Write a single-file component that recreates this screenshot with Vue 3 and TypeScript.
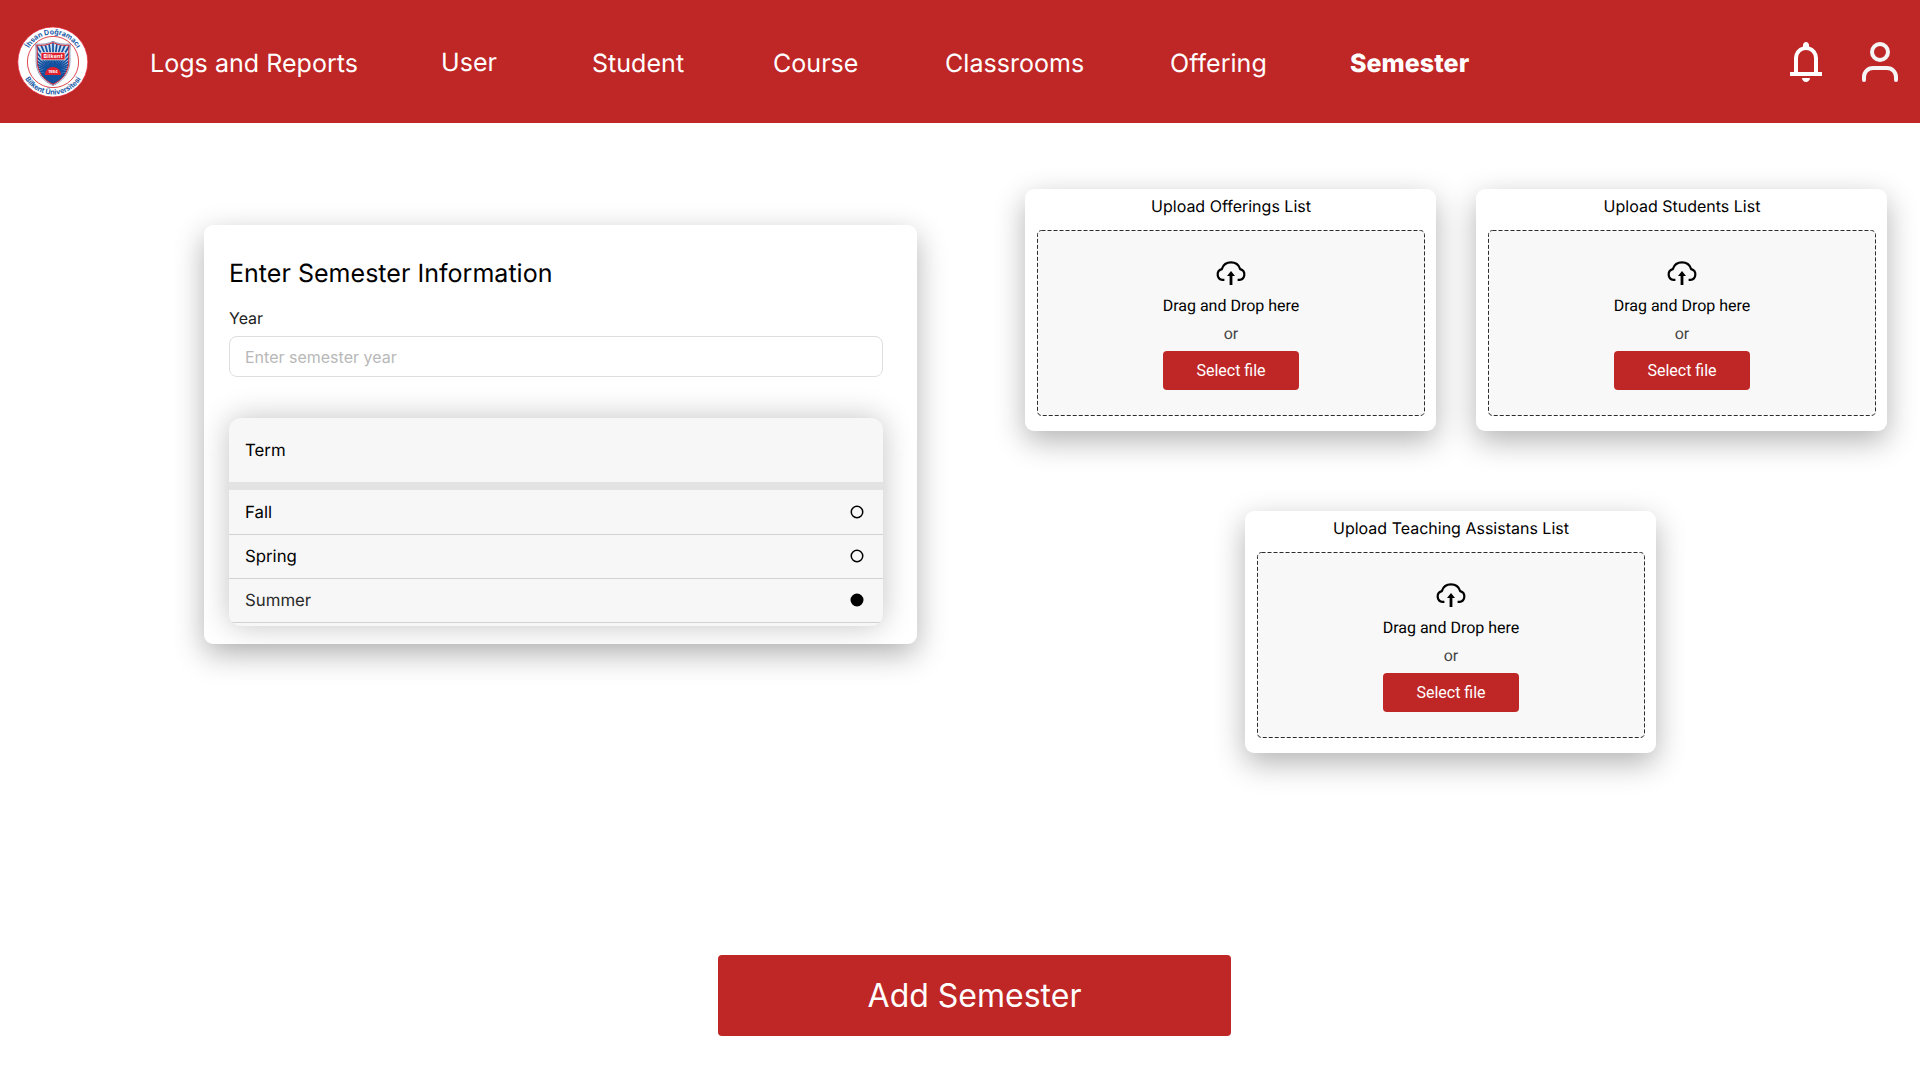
<script setup lang="ts">
import { ref } from 'vue'

interface NavItem {
  label: string
  raised?: boolean
}

const navItems: NavItem[] = [
  { label: 'Logs and Reports' },
  { label: 'User', raised: true },
  { label: 'Student' },
  { label: 'Course' },
  { label: 'Classrooms' },
  { label: 'Offering' },
  { label: 'Semester' },
]
const activeItem = ref('Semester')

const terms: string[] = ['Fall', 'Spring', 'Summer']
const selectedTerm = ref('Summer')
const year = ref('')

const uploads: string[] = [
  'Upload Offerings List',
  'Upload Students List',
  'Upload Teaching Assistans List',
]

// Angles of the rays that fan out behind the crest
const rays: number[] = Array.from({ length: 45 }, (_, i) => i * 8)
</script>

<template>
  <div class="page">
    <header class="topbar">
      <svg class="logo" viewBox="0 0 72 72" width="72" height="72">
        <defs>
          <path id="arc-top" d="M8.300 36a27.700 27.700 0 0 1 55.400 0" />
          <path id="arc-bottom" d="M3.400 36a32.600 32.600 0 0 0 65.200 0" />
          <clipPath id="shield-clip">
            <path d="M19.500 19Q29 20 36 16.500Q43 20 52.500 19Q51.500 24 52 34C52 47 45 54 36 58.500C27 54 20 47 20 34Q20.500 24 19.500 19Z" />
          </clipPath>
        </defs>
        <circle cx="35.800" cy="36" r="35" fill="#fff" stroke="#e3263a" stroke-width="0.700" />
        <circle cx="36" cy="36" r="25.600" fill="none" stroke="#d8343c" stroke-width="0.900" />
        <path d="M18.600 18Q29 19 36 15.300Q43 19 53.400 18Q52.500 24 53 34C53 48 45.500 55 36 59.600C26.500 55 19 48 19 34Q19.500 24 18.600 18Z" fill="#fff" stroke="#6a7fa8" stroke-width="0.800" />
        <g clip-path="url(#shield-clip)">
          <rect x="18" y="14" width="36" height="46" fill="#cfdff0" />
          <line
            v-for="a in rays"
            :key="a"
            x1="36"
            y1="46"
            x2="36"
            y2="10"
            stroke="#12509e"
            stroke-width="1.700"
            :transform="`rotate(${a} 36 46)`"
          />
          <rect x="18" y="49" width="36" height="11" fill="#12509e" />
        </g>
        <path d="M28 49a8 8 0 0 1 16 0Z" fill="#e0202c" />
        <path d="M19.900 19.200Q29 20 36 16.500Q43 20 52.100 19.200Q51.500 24 51.800 34C51.800 47 45 54 36 58.300C27 54 20.200 47 20.200 34Q20.500 24 19.900 19.200Z" fill="none" stroke="#dc2a34" stroke-width="1" />
        <rect x="24" y="26.300" width="24" height="7.600" fill="#e0202c" stroke="#fff" stroke-width="0.600" />
        <text class="crest-name" x="36.100" y="32.200" text-anchor="middle">Bilkent</text>
        <text class="crest-year" x="36" y="47.300" text-anchor="middle">1984</text>
        <text class="ring-text"><textPath href="#arc-top" startOffset="50%" text-anchor="middle">İhsan Doğramacı</textPath></text>
        <text class="ring-text"><textPath href="#arc-bottom" startOffset="50%" text-anchor="middle">Bilkent Üniversitesi</textPath></text>
      </svg>

      <nav class="nav">
        <a
          v-for="item in navItems"
          :key="item.label"
          class="nav-item"
          :class="{ active: item.label === activeItem, raised: item.raised }"
          @click="activeItem = item.label"
        >{{ item.label }}</a>
      </nav>

      <div class="actions">
        <svg viewBox="0 0 48 48" width="48" height="48" fill="#fff">
          <path d="M8 38v-4h4V20q0-4.150 2.500-7.375T21 8.400V7q0-1.250.875-2.125T24 4q1.250 0 2.125.875T27 7v1.400q4 1 6.500 4.225T36 20v14h4v4Zm16 6q-1.650 0-2.825-1.175Q20 41.650 20 40h8q0 1.650-1.175 2.825Q25.650 44 24 44Zm-8-10h16V20q0-3.300-2.350-5.650T24 12t-5.650 2.350Q16 16.700 16 20Z" />
        </svg>
        <svg viewBox="0 0 48 48" width="48" height="48" fill="none" stroke="#f5f5f5" stroke-width="4" stroke-linecap="round">
          <circle cx="24" cy="14" r="8" />
          <path d="M8 42v-3a9 9 0 0 1 9-9h14a9 9 0 0 1 9 9v3" />
        </svg>
      </div>
    </header>

    <main class="content">
      <section class="form-card">
        <h1 class="form-title">Enter Semester Information</h1>
        <label class="field-label" for="year">Year</label>
        <input id="year" v-model="year" class="field" type="text" placeholder="Enter semester year" />

        <div class="term-card">
          <div class="term-head">Term</div>
          <div
            v-for="term in terms"
            :key="term"
            class="term-row"
            :class="{ chosen: term === selectedTerm }"
            @click="selectedTerm = term"
          >
            <span>{{ term }}</span>
            <svg class="radio" viewBox="0 0 14 14" width="14" height="14">
              <circle cx="7" cy="7" r="5.750" :fill="term === selectedTerm ? '#000' : 'none'" stroke="#000" stroke-width="1.500" />
            </svg>
          </div>
        </div>
      </section>

      <section class="uploads">
        <article v-for="title in uploads" :key="title" class="upload-card">
          <h2 class="upload-title">{{ title }}</h2>
          <div class="drop">
            <svg class="drop-outline" width="388" height="186">
              <rect x="0.500" y="0.500" width="387" height="185" rx="4" fill="#f8f8f8" stroke="#2d2d2d" stroke-dasharray="4 2" />
            </svg>
            <svg class="cloud" viewBox="0 0 30 24" width="30" height="24">
              <path d="M8.400 18.900H6.600A5.500 5.500 0 0 1 5.800 8.100A9.700 9.700 0 0 1 24.200 8.100A5.500 5.500 0 0 1 23.400 18.900H21.600" fill="none" stroke="#000" stroke-width="2.200" />
              <path d="M15 10L19 15H16.400V24H13.600V15H11Z" fill="#000" />
            </svg>
            <p class="drop-text">Drag and Drop here</p>
            <p class="drop-or">or</p>
            <button class="select" type="button">Select file</button>
          </div>
        </article>
      </section>
    </main>

    <footer class="footer">
      <button class="submit" type="button">Add Semester</button>
    </footer>
  </div>
</template>

<style>
body {
  margin: 0;
  background: #fff;
}
</style>

<style scoped>
.page {
  width: 1920px;
  height: 1080px;
  overflow: hidden;
  display: flex;
  flex-direction: column;
  background: #fff;
  font-family: Inter, 'Liberation Sans', sans-serif;
  color: #000;
  text-rendering: geometricPrecision;
}

.topbar {
  box-sizing: border-box;
  flex: none;
  height: 123px;
  padding: 0 16px 0 17px;
  display: flex;
  align-items: center;
  background: #bf2626;
}

.logo {
  flex: none;
  margin-right: 61px;
}

.ring-text {
  font: 700 7.1px Inter, sans-serif;
  fill: #1b5ca8;
}

.crest-name {
  font: 700 5.4px Inter, sans-serif;
  letter-spacing: 0.2px;
  fill: #fff;
}

.crest-year {
  font: 700 4px Inter, sans-serif;
  fill: #fff;
}

.nav {
  flex: 1;
  display: grid;
  grid-template-columns: 291px 151px 181px 172px 225px 180px auto;
  align-items: center;
}

.nav-item {
  color: #fff;
  font-size: 25px;
  line-height: 30px;
  letter-spacing: 0.04px;
  white-space: nowrap;
  padding-top: 5px;
  cursor: pointer;
}

.nav-item.raised {
  padding: 4px 0 1px;
}

.nav-item.active {
  font-weight: 800;
}

.actions {
  display: flex;
  gap: 26px;
}

.actions svg {
  display: block;
}

.content {
  display: flex;
  align-items: flex-start;
  padding: 66px 33px 0 204px;
  height: 766px;
  box-sizing: border-box;
}

.form-card {
  box-sizing: border-box;
  width: 713px;
  height: 419px;
  margin-top: 36px;
  padding: 34px 34px 0 25px;
  border-radius: 9px;
  background: #fff;
  box-shadow: 0 10px 30px rgba(0, 0, 0, 0.3);
  display: flex;
  flex-direction: column;
}

.form-title {
  margin: 0;
  font-size: 25px;
  line-height: 30px;
  letter-spacing: 0.03px;
  font-weight: 400;
}

.field-label {
  margin-top: 19px;
  font-size: 16px;
  line-height: 20px;
  color: #222;
}

.field {
  box-sizing: border-box;
  width: 654px;
  height: 41px;
  margin: 8px 0 0;
  padding: 0 15px;
  border: 1px solid #dedede;
  border-radius: 8px;
  background: #fff;
  font: 400 16px Inter, sans-serif;
  outline: none;
}

.field::placeholder {
  color: #b8b8b8;
  opacity: 1;
}

.term-card {
  width: 654px;
  height: 208px;
  margin-top: 41px;
  border-radius: 12px;
  overflow: hidden;
  background: #f7f7f7;
  box-shadow: 0 0 30px rgba(0, 0, 0, 0.24);
  font-size: 16.8px;
}

.term-head {
  height: 64px;
  padding-left: 16px;
  line-height: 66px;
  border-bottom: 8px solid #e3e3e3;
}

.term-row {
  box-sizing: border-box;
  height: 44px;
  padding: 0 19px 0 16px;
  border-bottom: 1px solid #d2d2d2;
  display: flex;
  align-items: center;
  justify-content: space-between;
  line-height: 21px;
}

.term-row span {
  padding-top: 2px;
}

.term-row .radio {
  margin-bottom: 1px;
}

.term-head + .term-row {
  height: 45px;
  padding-top: 1px;
}

.term-row.chosen {
  color: #2a2a2a;
}

.uploads {
  width: 862px;
  margin-left: 108px;
  display: flex;
  flex-wrap: wrap;
  justify-content: space-between;
  row-gap: 80px;
}

.upload-card {
  box-sizing: border-box;
  width: 411px;
  height: 242px;
  padding: 7px 11px 0 12px;
  border-radius: 9px;
  background: #fff;
  box-shadow: 0 10px 30px rgba(0, 0, 0, 0.3);
}

.upload-card:last-child {
  margin-left: 220px;
}

.upload-title {
  margin: 0;
  font-size: 16px;
  line-height: 20px;
  font-weight: 400;
  text-align: center;
}

.drop {
  position: relative;
  box-sizing: border-box;
  height: 186px;
  margin-top: 14px;
  padding-top: 31px;
  display: flex;
  flex-direction: column;
  align-items: center;
  font-family: Roboto, sans-serif;
  font-size: 16px;
}

.drop-outline {
  position: absolute;
  inset: 0;
}

.cloud,
.drop-text,
.drop-or,
.select {
  position: relative;
}

.drop-text {
  margin: 11px 0 0;
  line-height: 20px;
}

.drop-or {
  margin: 8px 0 0;
  line-height: 20px;
  color: #444;
}

.select {
  width: 136px;
  height: 39px;
  margin-top: 7px;
  padding: 0;
  border: 0;
  border-radius: 4px;
  background: #bf2626;
  color: #fff;
  font: 400 16px Roboto, sans-serif;
}

.footer {
  flex: none;
  display: flex;
  padding: 66px 0 0 718px;
}

.submit {
  width: 513px;
  height: 81px;
  padding: 0;
  border: 0;
  border-radius: 4px;
  background: #bf2626;
  color: #fff;
  font: 400 32px Inter, sans-serif;
}
</style>
